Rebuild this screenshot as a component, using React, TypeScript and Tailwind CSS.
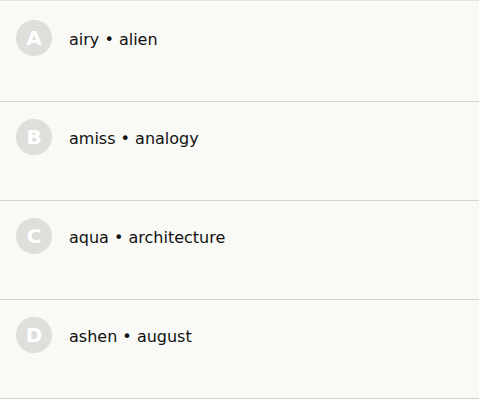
import React from "react";

const items = [
  { letter: "A", text: "airy • alien" },
  { letter: "B", text: "amiss • analogy" },
  { letter: "C", text: "aqua • architecture" },
  { letter: "D", text: "ashen • august" },
];

export default function App() {
  return (
    <div
      className="w-[479px] h-[400px] bg-[#f9f9f6] border-t border-[#e4e4e0] pt-[2px]"
      style={{ fontFamily: '"DejaVu Sans", Verdana, sans-serif' }}
    >
      {items.map((it) => (
        <div
          key={it.letter}
          className="h-[99px] border-b border-[#d6d6d1] flex items-start pt-[17px] pl-4"
        >
          <div className="w-9 h-9 rounded-full bg-[#dededb] text-white font-bold text-[20px] leading-none flex items-center justify-center">
            {it.letter}
          </div>
          <div className="ml-[17px] pt-[2px] text-[16px] text-[#111] leading-9">{it.text}</div>
        </div>
      ))}
    </div>
  );
}
